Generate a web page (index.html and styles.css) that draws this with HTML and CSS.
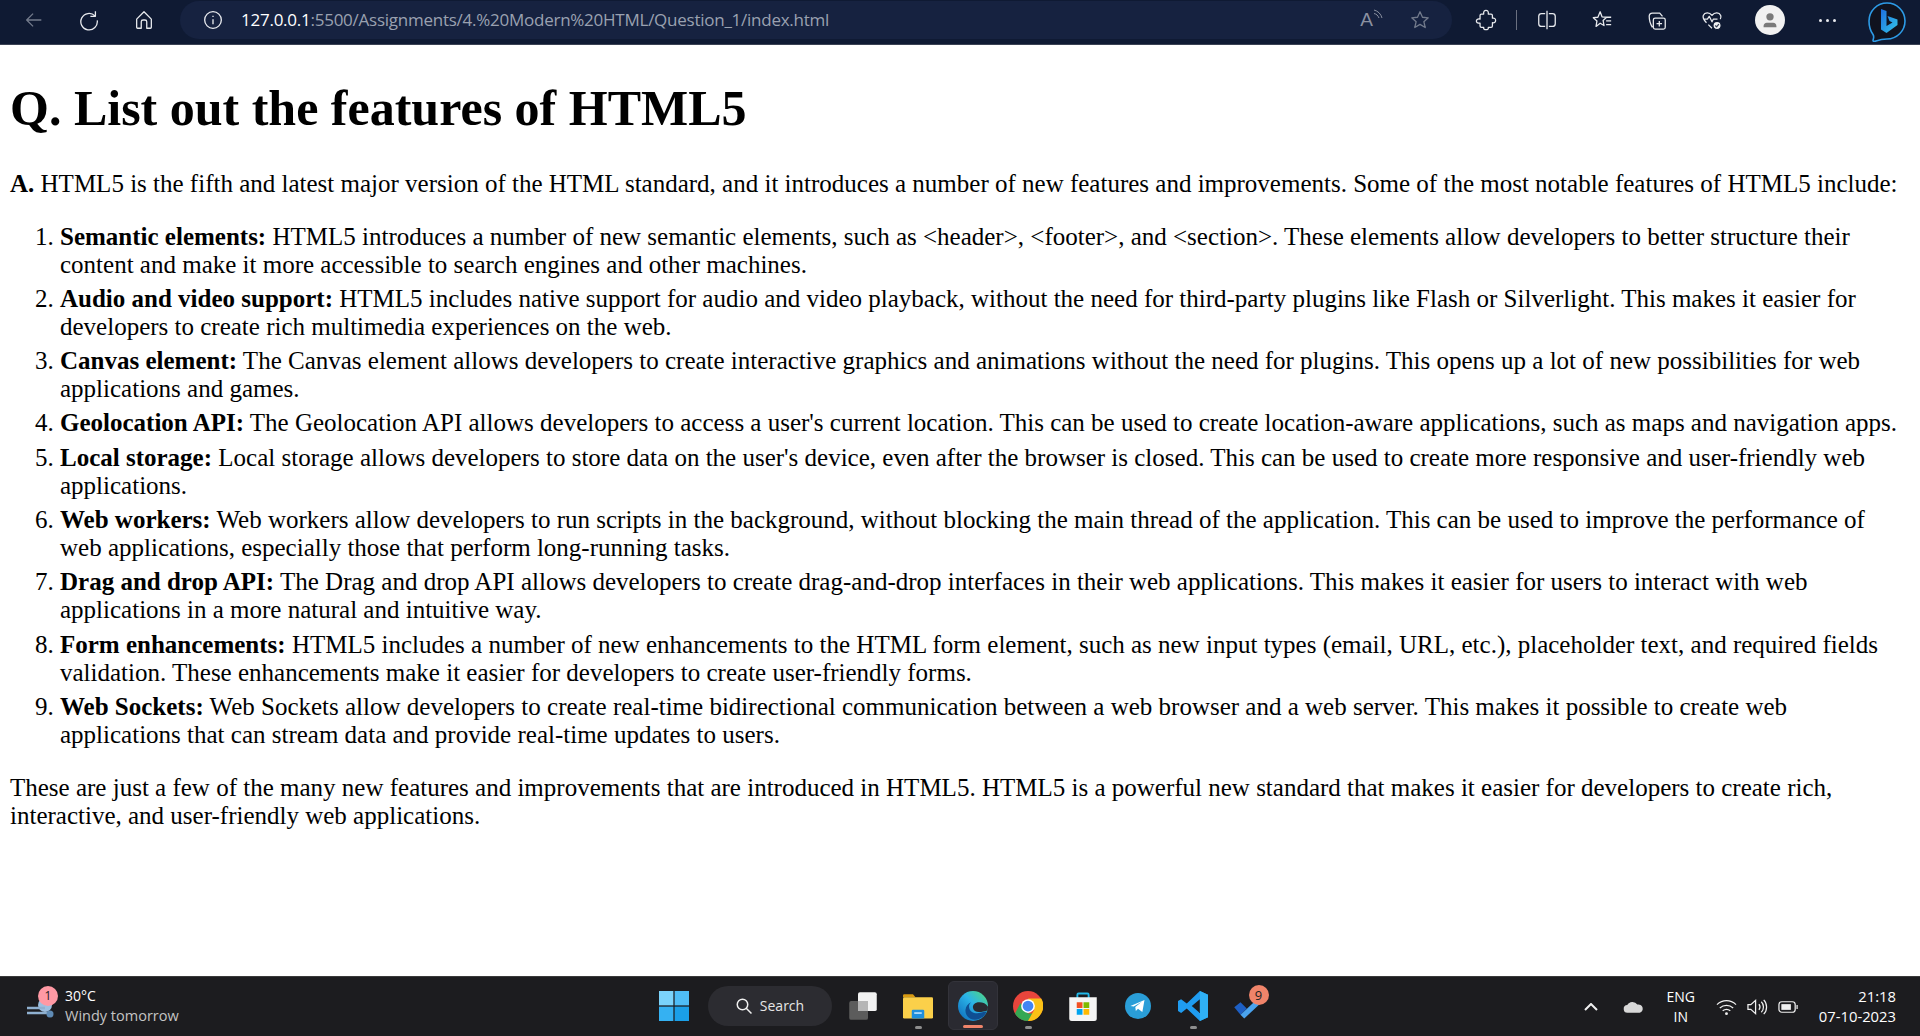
FILE: index.html
```html
<!DOCTYPE html>
<html lang="en">

<head>
    <meta charset="UTF-8">
    <title>Features of HTML5</title>
    <link rel="stylesheet" href="styles.css">
</head>

<body>
    <!-- Browser toolbar -->
    <div class="toolbar">
        <div class="nav-buttons">
            <svg class="tool-icon dim" viewBox="0 0 24 24"><path d="M20 12H4M11 5l-7 7 7 7"/></svg>
            <svg class="tool-icon" viewBox="0 0 24 24"><path d="M18.500 7.500A9 9 0 1 0 21 12.500M19 2.500v5.500h-5.500"/></svg>
            <svg class="tool-icon" viewBox="0 0 24 24"><path d="M4 11l8-8 8 8v9a1 1 0 0 1-1 1h-4v-7a2 2 0 0 0-2-2h-2a2 2 0 0 0-2 2v7H5a1 1 0 0 1-1-1z"/></svg>
        </div>
        <div class="address-bar">
            <svg class="info-icon" viewBox="0 0 24 24"><circle cx="12" cy="12" r="10"/><path d="M12 11v6M12 7v1.500"/></svg>
            <span class="url"><span class="url-host">127.0.0.1</span>:5500/Assignments/4.%20Modern%20HTML/Question_1/index.html</span>
            <span class="read-aloud">A<svg viewBox="0 0 10 10"><path d="M1 1c4 1 7 4 8 8M1 4.500c2.500.5 4 2 5 4.500"/></svg></span>
            <svg class="tool-icon dim" viewBox="0 0 24 24"><path d="M12 3l2.700 6 6.300.6-4.800 4.200 1.500 6.400L12 16.800l-5.700 3.400 1.500-6.400L3 9.600 9.300 9z"/></svg>
        </div>
        <div class="tool-buttons">
            <svg class="tool-icon" viewBox="0 0 24 24"><path d="M9.500 5.500C9 2.500 10.500 1.500 12 1.500s3 1 2.500 4h3c1 0 1.500.5 1.500 1.500v3c2.500-.5 3.500 1 3.500 2.500S21.500 15.500 19 15v3.500c0 1-.5 1.500-1.500 1.500h-3c.5 2-1 2.500-2.500 2.500s-3-.5-2.500-2.500H7c-1 0-1.500-.5-1.500-1.500v-3C3 15.500 1.500 14.500 1.500 13S3 10.500 5.500 11V7c0-1 .5-1.500 1.500-1.500z"/></svg>
            <span class="tool-sep"></span>
            <svg class="tool-icon" viewBox="0 0 24 24"><path d="M12 2v20M10 5H6a3 3 0 0 0-3 3v8a3 3 0 0 0 3 3h4M14 5h4a3 3 0 0 1 3 3v8a3 3 0 0 1-3 3h-4"/></svg>
            <svg class="tool-icon" viewBox="0 0 24 24"><path d="M10 3l2 5.500 5 .5-3.800 3.500 1 5.500L10 15.500 5.500 19l1-6L2.500 9.500l5-.5zM16 9h6M16.500 13H22M16.500 17H22"/></svg>
            <svg class="tool-icon" viewBox="0 0 24 24"><path d="M7 20c-2-3-3.500-7-3.500-12 0-2 1.500-3.500 3.500-3.500h8l3 3.500M10 10h9a2 2 0 0 1 2 2v8a2 2 0 0 1-2 2h-9a2 2 0 0 1-2-2v-8a2 2 0 0 1 2-2zM14.500 13v6M11.500 16h6"/></svg>
            <svg class="tool-icon" viewBox="0 0 24 24"><path d="M6 15C3 12 1.500 10 2.500 7 4 3.500 9 3 12 7c3-4 8-3.500 9.500 0 .5 1.500.2 3-.5 4M2.500 11H7l2-3 3 6 1.500-3H18M8 17l4 4"/><circle class="filled" cx="17.500" cy="18" r="4.500"/><path class="badge-check" d="M15.500 18l1.500 1.500 2.500-3"/></svg>
            <span class="avatar"><svg viewBox="0 0 24 24"><circle cx="12" cy="8.500" r="4"/><path d="M5 20v-1.500c0-2 1.500-3.500 3.500-3.500h7c2 0 3.500 1.500 3.500 3.500V20z"/></svg></span>
            <span class="more-dots"><i></i><i></i><i></i></span>
            <svg class="bing-icon" viewBox="0 0 38 40">
                <defs>
                    <linearGradient id="bingGrad" x1="0" y1="0" x2="1" y2="1">
                        <stop offset="0" stop-color="#1e6fe0"/>
                        <stop offset="1" stop-color="#33c6e8"/>
                    </linearGradient>
                </defs>
                <path d="M19 1c9.800 0 18 8 18 18s-8.200 18-18 18c-4 0-7 .5-11 2-2 .7-3.500.5-2.800-1.500.7-2 .8-3.500-.2-5C2.500 29 1 24 1 19 1 9 9.200 1 19 1z" fill="#10131f" stroke="#2d9be6" stroke-width="1.600"/>
                <path d="M13 7l5.500 2v15l6-3.500-3-1.500-2-5 10 3.500v5.500L18.500 31 13 27.500z" fill="url(#bingGrad)"/>
            </svg>
        </div>
    </div>
    <div class="toolbar-line"></div>

    <!-- Page content -->
    <div class="page">
        <h1>Q. List out the features of HTML5</h1>
        <p><b>A.</b> HTML5 is the fifth and latest major version of the HTML standard, and it introduces a number of new features and improvements. Some of the most notable features of HTML5 include:</p>
        <ol>
            <li><b>Semantic elements:</b> HTML5 introduces a number of new semantic elements, such as &lt;header&gt;, &lt;footer&gt;, and &lt;section&gt;. These elements allow developers to better structure their content and make it more accessible to search engines and other machines.</li>
            <li><b>Audio and video support:</b> HTML5 includes native support for audio and video playback, without the need for third-party plugins like Flash or Silverlight. This makes it easier for developers to create rich multimedia experiences on the web.</li>
            <li><b>Canvas element:</b> The Canvas element allows developers to create interactive graphics and animations without the need for plugins. This opens up a lot of new possibilities for web applications and games.</li>
            <li><b>Geolocation API:</b> The Geolocation API allows developers to access a user's current location. This can be used to create location-aware applications, such as maps and navigation apps.</li>
            <li><b>Local storage:</b> Local storage allows developers to store data on the user's device, even after the browser is closed. This can be used to create more responsive and user-friendly web applications.</li>
            <li><b>Web workers:</b> Web workers allow developers to run scripts in the background, without blocking the main thread of the application. This can be used to improve the performance of web applications, especially those that perform long-running tasks.</li>
            <li><b>Drag and drop API:</b> The Drag and drop API allows developers to create drag-and-drop interfaces in their web applications. This makes it easier for users to interact with web applications in a more natural and intuitive way.</li>
            <li><b>Form enhancements:</b> HTML5 includes a number of new enhancements to the HTML form element, such as new input types (email, URL, etc.), placeholder text, and required fields validation. These enhancements make it easier for developers to create user-friendly forms.</li>
            <li><b>Web Sockets:</b> Web Sockets allow developers to create real-time bidirectional communication between a web browser and a web server. This makes it possible to create web applications that can stream data and provide real-time updates to users.</li>
        </ol>
        <p>These are just a few of the many new features and improvements that are introduced in HTML5. HTML5 is a powerful new standard that makes it easier for developers to create rich, interactive, and user-friendly web applications.</p>
    </div>

    <!-- Windows taskbar -->
    <div class="taskbar">
        <div class="weather">
            <span class="weather-icon">
                <svg viewBox="0 0 34 30">
                    <circle cx="20" cy="13" r="7" fill="#9dbfe0"/>
                    <path d="M2 16h18M2 21h24" stroke="#8fb0d0" stroke-width="2.500" fill="none"/>
                    <circle cx="25" cy="22" r="3.500" fill="#5f8bb5"/>
                </svg>
                <span class="weather-badge">1</span>
            </span>
            <div class="weather-text">
                <div class="temp">30°C</div>
                <div class="forecast">Windy tomorrow</div>
            </div>
        </div>

        <div class="task-icons">
            <span class="task-item">
                <svg viewBox="0 0 24 24">
                    <rect x="0" y="0" width="11.500" height="11.500" fill="#7bd3fb"/>
                    <rect x="12.500" y="0" width="11.500" height="11.500" fill="#4fbdf6"/>
                    <rect x="0" y="12.500" width="11.500" height="11.500" fill="#35b1f2"/>
                    <rect x="12.500" y="12.500" width="11.500" height="11.500" fill="#1a9fe8"/>
                </svg>
            </span>
            <span class="search-pill">
                <svg viewBox="0 0 24 24"><circle cx="10" cy="10" r="7"/><path d="M15 15l7 7"/></svg>
                Search
            </span>
            <span class="task-item">
                <svg viewBox="0 0 24 24">
                    <rect x="1" y="8" width="15" height="15" rx="1.500" fill="#5c5c5c"/>
                    <rect x="8" y="1" width="15" height="15" rx="1.500" fill="#f2f2f2"/>
                    <rect x="8" y="8" width="8" height="8" fill="#b5b5b5"/>
                </svg>
            </span>
            <span class="task-item has-dot">
                <svg viewBox="0 0 24 24">
                    <path d="M0 3.500a1 1 0 0 1 1-1h7l2 2.500H0z" fill="#d89a12"/>
                    <rect x="0" y="5" width="24" height="17" rx="1" fill="#fbd04a"/>
                    <rect x="7" y="15" width="10" height="7" rx="1" fill="#1f8fdc"/>
                    <rect x="9" y="17" width="6" height="1.300" fill="#bfe4fb"/>
                </svg>
            </span>
            <span class="task-item active">
                <svg viewBox="0 0 24 24">
                    <defs>
                        <linearGradient id="edgeGrad" x1="0" y1="1" x2="1" y2="0">
                            <stop offset="0" stop-color="#0b66b8"/>
                            <stop offset="0.55" stop-color="#2bb4e8"/>
                            <stop offset="1" stop-color="#55dc72"/>
                        </linearGradient>
                    </defs>
                    <circle cx="12" cy="12" r="12" fill="url(#edgeGrad)"/>
                    <path d="M23 16.500c-2 4-5.500 6.500-9.500 6.500-4.500 0-8-3.500-7.500-8 .3-2.800 2-5 4.500-6-1.500 1.200-2 3-1.500 4.800.8 3 3.500 4.200 6.500 4 3-.2 5.500-1.500 7.500-1.300z" fill="#0f4e92"/>
                    <path d="M12 13.500c-.5-2.500 1.500-4.500 5-4.500 3 0 5.500 1.200 7 3.500l-.3 3c-2 .3-4.500 1.300-7 1.300-2.500 0-4.300-1.300-4.700-3.300z" fill="#2a2a31"/>
                </svg>
            </span>
            <span class="task-item has-dot">
                <svg viewBox="0 0 24 24">
                    <circle cx="12" cy="12" r="12" fill="#e8453c"/>
                    <path d="M12 24a12 12 0 0 1-10.400-6L6 9.500l6 8.500 4 0z" fill="#34a853"/>
                    <path d="M12 6h10.600A12 12 0 0 1 12 24l5-9z" fill="#fbc116"/>
                    <circle cx="12" cy="12" r="5.500" fill="#fff"/>
                    <circle cx="12" cy="12" r="4.300" fill="#4285f4"/>
                </svg>
            </span>
            <span class="task-item">
                <svg viewBox="0 0 24 24">
                    <path d="M7.500 6V3a1 1 0 0 1 1-1h7a1 1 0 0 1 1 1v3" fill="none" stroke="#22b8e8" stroke-width="1.500"/>
                    <path d="M1 5h22v17a2 2 0 0 1-2 2H3a2 2 0 0 1-2-2z" fill="#f5f5f5"/>
                    <rect x="7" y="9" width="4.600" height="4.600" fill="#f25022"/>
                    <rect x="12.400" y="9" width="4.600" height="4.600" fill="#7fba00"/>
                    <rect x="7" y="14.400" width="4.600" height="4.600" fill="#00a4ef"/>
                    <rect x="12.400" y="14.400" width="4.600" height="4.600" fill="#ffb900"/>
                </svg>
            </span>
            <span class="task-item telegram">
                <svg viewBox="0 0 24 24">
                    <circle cx="12" cy="12" r="12" fill="#2a9ed8"/>
                    <path d="M5 12l13-5.500-2 11-4-3-2 2-.5-3.500 6-5-7.500 4.500z" fill="#fff"/>
                </svg>
            </span>
            <span class="task-item has-dot">
                <svg viewBox="0 0 24 24">
                    <path d="M17.500 0L24 3v18l-6.500 3L7 14l-4.500 3.500L0 16V8l2.500-1.500L7 10zM17.500 6.500L11 12l6.500 5.500z" fill="#1f9cf0" fill-rule="evenodd"/>
                    <path d="M17.500 0L24 3v18l-6.500 3z" fill="#2fb0f5"/>
                </svg>
            </span>
            <span class="task-item">
                <svg viewBox="0 0 24 24">
                    <path d="M1 13l5-4 5 5-5 5z" fill="#1d5fc4"/>
                    <path d="M6 19L21 5l3 3-15 14z" fill="#4aa3ee"/>
                </svg>
                <span class="todo-badge">9</span>
            </span>
        </div>

        <div class="tray">
            <svg class="tray-chevron" viewBox="0 0 14 8"><path d="M1 7l6-6 6 6"/></svg>
            <svg class="tray-cloud" viewBox="0 0 22 14"><path d="M5 13a4 4 0 0 1-.5-8A6 6 0 0 1 15 4.500a4.300 4.300 0 0 1 2.500 8.500z"/></svg>
            <div class="lang">ENG<br>IN</div>
            <div class="tray-status">
                <svg viewBox="0 0 22 18"><path d="M1 6.500c6-5.500 14-5.500 20 0M4 10c4-3.500 10-3.500 14 0M7 13c2.500-2 5.500-2 8 0"/><circle class="filled" cx="11" cy="16" r="1.500"/></svg>
                <svg viewBox="0 0 22 18"><path d="M1 6.500v5h3l5 4.500V2L4 6.500zM12.500 6c1.500 2 1.500 4 0 6M15 3.500c3 3 3 8 0 11M17.500 1.500c4 4 4 11 0 15"/></svg>
                <svg viewBox="0 0 22 18"><rect x="1" y="3.500" width="17" height="11" rx="3"/><rect class="filled" x="3.500" y="6" width="10" height="6"/><path d="M20 7v4"/></svg>
            </div>
            <div class="clock">21:18<br>07-10-2023</div>
        </div>
    </div>
</body>

</html>
```
FILE: styles.css
```css
/* General */
html,
body {
    margin: 0;
    padding: 0;
    height: 100%;
    overflow: hidden;
}

body {
    display: flex;
    flex-direction: column;
    background-color: #fff;
}

/* Browser toolbar */
.toolbar {
    display: flex;
    align-items: center;
    height: 44px;
    padding-bottom: 4px;
    box-sizing: border-box;
    background-color: #0f1a33;
    flex-shrink: 0;
}

.toolbar-line {
    height: 1px;
    background-color: #3b4254;
    flex-shrink: 0;
}

.nav-buttons {
    display: flex;
    align-items: center;
    gap: 33px;
    width: 180px;
    padding-left: 23px;
    box-sizing: border-box;
}

.tool-icon {
    width: 22px;
    height: 22px;
    fill: none;
    stroke: #e8eaee;
    stroke-width: 1.4;
    stroke-linejoin: round;
    flex-shrink: 0;
}

.tool-icon.dim {
    stroke: #737b8c;
}

.tool-icon .filled {
    fill: #f1f2f4;
    stroke: #0f1a33;
}

.tool-icon .badge-check {
    stroke: #3a4256;
}

.address-bar {
    display: flex;
    align-items: center;
    width: 1272px;
    height: 38px;
    padding: 0 21px 0 23px;
    box-sizing: border-box;
    border-radius: 19px;
    background-color: #162240;
}

.info-icon {
    width: 20px;
    height: 20px;
    fill: none;
    stroke: #e8eaee;
    stroke-width: 1.6;
}

.url {
    flex: 1;
    margin-left: 18px;
    margin-bottom: 2px;
    font-family: "Open Sans", "Liberation Sans", sans-serif;
    font-size: 17px;
    letter-spacing: -0.25px;
    color: #9aa1b0;
    white-space: nowrap;
}

.url-host {
    color: #fff;
}

.read-aloud {
    display: flex;
    margin-right: 26px;
    font-family: "Liberation Sans", sans-serif;
    font-size: 19px;
    color: #8b91a0;
}

.read-aloud svg {
    width: 10px;
    height: 10px;
    fill: none;
    stroke: #8b91a0;
    stroke-width: 1;
}

.tool-buttons {
    display: flex;
    align-items: center;
    margin-left: 23px;
    gap: 33px;
}

.tool-sep {
    width: 1px;
    height: 20px;
    margin: 0 -14px;
    background-color: #6a7080;
}

.avatar {
    display: flex;
    justify-content: center;
    align-items: center;
    width: 30px;
    height: 30px;
    margin-left: -1px;
    border-radius: 50%;
    background-color: #f1f1f1;
}

.avatar svg {
    width: 22px;
    height: 22px;
    fill: #7a7a7a;
}

.more-dots {
    display: flex;
    gap: 4px;
    width: 17px;
    margin-left: 1px;
}

.more-dots i {
    width: 3px;
    height: 3px;
    border-radius: 50%;
    background-color: #e8eaee;
}

.bing-icon {
    width: 38px;
    height: 40px;
    margin-top: 4px;
    margin-left: -1px;
}

/* Page content */
.page {
    flex: 1;
    padding: 0 10px;
    overflow: hidden;
    color: #000;
    font-family: "Liberation Serif", "Times New Roman", serif;
    font-size: 25px;
    line-height: 28px;
}

h1 {
    margin: 33.500px 0 33px;
    font-size: 50px;
    line-height: 58px;
}

p {
    margin: 25px 0;
}

ol {
    margin: 24px 0 25px;
    padding-left: 50px;
}

li {
    margin-bottom: 6.300px;
}

/* Taskbar */
.taskbar {
    display: grid;
    grid-template-columns: 1fr auto 1fr;
    align-items: center;
    height: 60px;
    border-top: 1px solid #3a3a3a;
    box-sizing: border-box;
    background-color: #1c1c1f;
    color: #fff;
    font-family: "Open Sans", "Noto Sans", sans-serif;
    flex-shrink: 0;
}

.weather {
    display: flex;
    align-items: center;
    padding-left: 25px;
    gap: 9px;
}

.weather-icon {
    position: relative;
    width: 31px;
    height: 30px;
}

.weather-icon svg {
    width: 34px;
    height: 30px;
}

.weather-badge {
    position: absolute;
    top: -6px;
    left: 13px;
    width: 20px;
    height: 20px;
    border-radius: 50%;
    background-color: #ff99a4;
    color: #222;
    font-size: 12px;
    line-height: 20px;
    text-align: center;
}

.weather-text {
    margin-bottom: 1px;
}

.temp,
.forecast {
    font-size: 14px;
    line-height: 20px;
}

.forecast {
    font-size: 14.500px;
    color: #c4c4c4;
}

.task-icons {
    display: flex;
    align-items: center;
    margin-left: 2px;
    margin-bottom: 2px;
}

.task-item {
    position: relative;
    display: flex;
    justify-content: center;
    align-items: center;
    width: 55px;
    height: 49px;
    box-sizing: border-box;
    border-radius: 6px;
}

.task-item > svg {
    width: 30px;
    height: 30px;
}

.task-item.telegram > svg {
    width: 26px;
    height: 26px;
}

.task-item.active {
    width: 50px;
    margin: 0 2.500px;
    background-color: #2a2a31;
    border: 1px solid #33333a;
}

.has-dot::after,
.active::after {
    content: "";
    position: absolute;
    bottom: 1px;
    left: 50%;
    width: 7px;
    height: 3px;
    margin-left: -3.500px;
    border-radius: 2px;
    background-color: #8e8e8e;
}

.active::after {
    width: 20px;
    margin-left: -10px;
    background-color: #f0846a;
}

.search-pill {
    display: flex;
    justify-content: center;
    align-items: center;
    gap: 7px;
    width: 124px;
    height: 40px;
    margin: 0 4px 0 6px;
    border-radius: 20px;
    background-color: #2c2c31;
    font-size: 14px;
    color: #e6e6e6;
}

.search-pill svg {
    width: 18px;
    height: 18px;
    fill: none;
    stroke: #f0f0f0;
    stroke-width: 2;
}

.todo-badge {
    position: absolute;
    top: 4px;
    right: 7px;
    width: 20px;
    height: 20px;
    border-radius: 50%;
    background-color: #f0846a;
    color: #222;
    font-size: 13px;
    line-height: 20px;
    text-align: center;
}

.tray {
    display: flex;
    justify-content: flex-end;
    align-items: center;
    padding-right: 24px;
    font-size: 14px;
}

.tray-chevron {
    width: 14px;
    height: 8px;
    fill: none;
    stroke: #f0f0f0;
    stroke-width: 2;
}

.tray-cloud {
    width: 21px;
    height: 14px;
    margin-left: 25px;
    fill: #d8d8d8;
}

.lang {
    margin-left: 23px;
    line-height: 20px;
    text-align: center;
}

.tray-status {
    display: flex;
    align-items: center;
    gap: 10px;
    margin-left: 21px;
}

.tray-status svg {
    width: 21px;
    height: 18px;
    fill: none;
    stroke: #f0f0f0;
    stroke-width: 1.3;
}

.tray-status .filled {
    fill: #f0f0f0;
    stroke: none;
}

.clock {
    margin-left: 6px;
    margin-bottom: 2px;
    width: 91px;
    font-size: 14.800px;
    line-height: 20px;
    text-align: right;
}
```
